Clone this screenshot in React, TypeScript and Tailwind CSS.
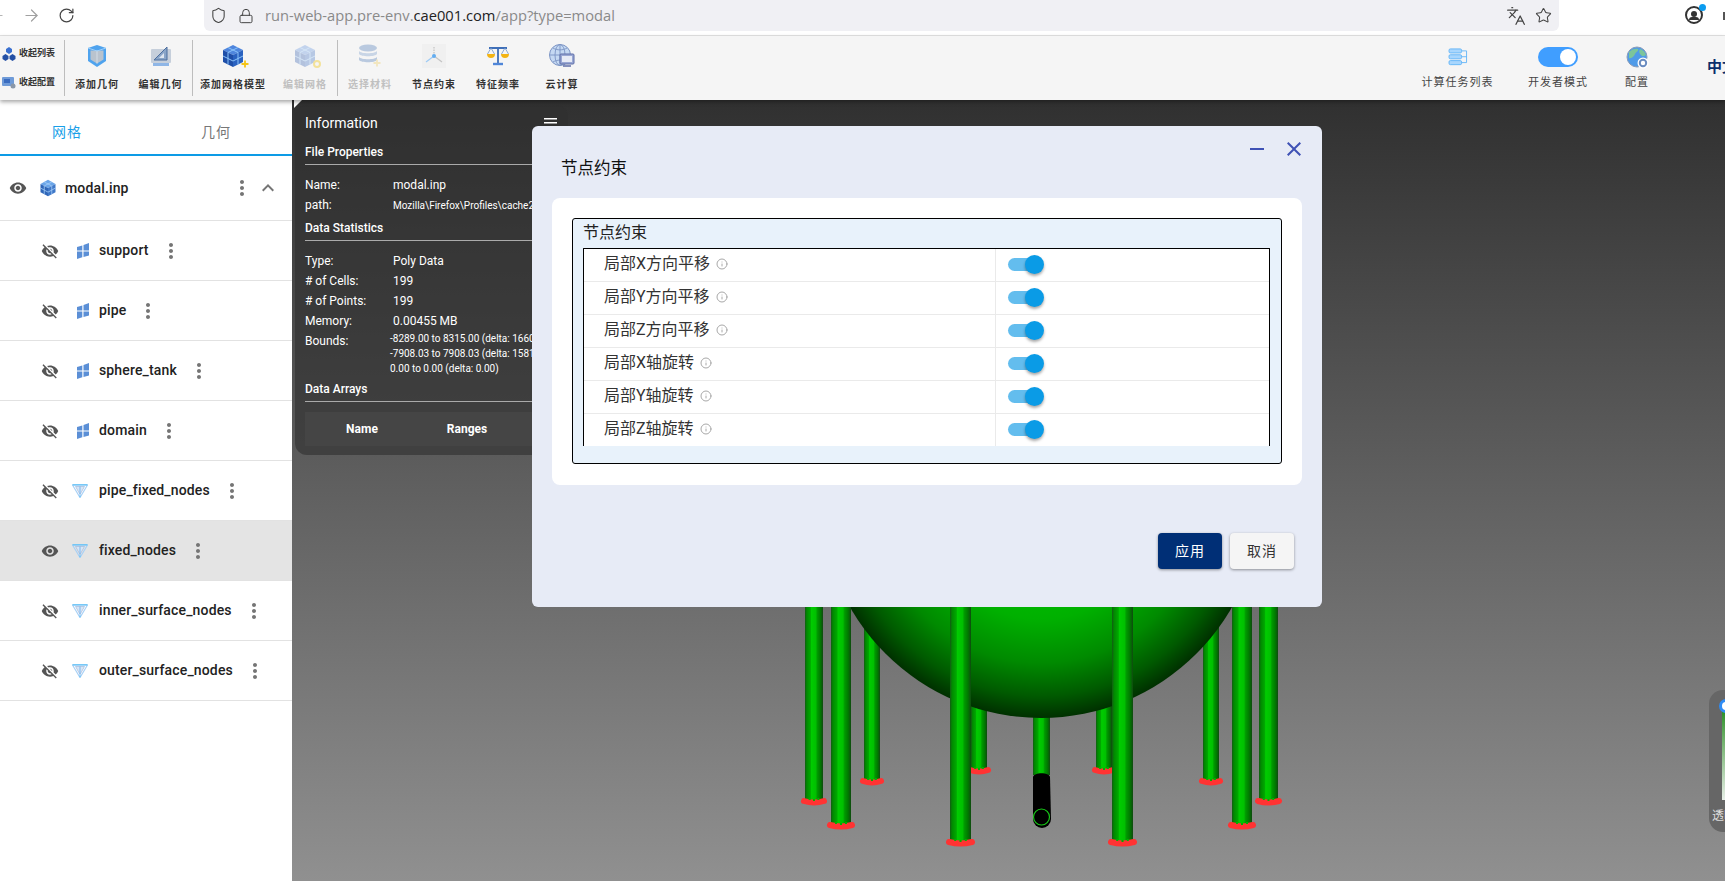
import { Info, Lock, RotateCw, ArrowLeft, ArrowRight, Shield, Star, Languages } from 'lucide-react';
import { MdVisibility, MdVisibilityOff, MdMoreVert, MdExpandLess, MdClose, MdRemove } from 'react-icons/md';

const meshRows = [
    { name: 'support', kind: 'pane' },
    { name: 'pipe', kind: 'pane' },
    { name: 'sphere_tank', kind: 'pane' },
    { name: 'domain', kind: 'pane' },
    { name: 'pipe_fixed_nodes', kind: 'node' },
    { name: 'fixed_nodes', kind: 'node', active: true },
    { name: 'inner_surface_nodes', kind: 'node' },
    { name: 'outer_surface_nodes', kind: 'node' },
];

const constraints = ['局部X方向平移', '局部Y方向平移', '局部Z方向平移', '局部X轴旋转', '局部Y轴旋转', '局部Z轴旋转'];

// pipes of the model, in page coordinates minus the viewer origin
const backPipes = [
    { x: 572, w: 16, b: 682 },
    { x: 679, w: 16, b: 671 },
    { x: 804, w: 16, b: 671 },
    { x: 911, w: 16, b: 682 },
];
const frontPipes = [
    { x: 513, w: 18, b: 702 },
    { x: 539, w: 20, b: 726 },
    { x: 658, w: 21, b: 743 },
    { x: 820, w: 21, b: 743 },
    { x: 940, w: 20, b: 726 },
    { x: 967, w: 19, b: 702 },
];

function CubeIcon({ size = 18 }: { size?: number }) {
    return (
        <svg width={size} height={size} viewBox="0 0 24 24">
            <path d="M12 1 22 6.500 12 12 2 6.500Z" fill="#6aa5e8" />
            <path d="M2 6.500 12 12v11L2 17.500Z" fill="#2f66b8" />
            <path d="M22 6.500 12 12v11l10-5.500Z" fill="#3f78c8" />
            <path d="M7 4 17 9.200M17 4 7 9.200M2 12l10 5.500 10-5.500M7 9.500V20M17 9.500V20" stroke="#a9d2fa" strokeWidth="1" fill="none" />
        </svg>
    );
}

function PaneIcon() {
    return (
        <svg width="12" height="16" viewBox="0 0 12 16" fill="#5b8fd6">
            <path d="M0 4 5.300 2.400v5H0Z" />
            <path d="M6.500 2 12 0v7.400H6.500Z" />
            <path d="M0 8.600h5.300v5.600L0 16Z" />
            <path d="M6.500 8.600H12v3.800l-5.500 1.500Z" />
        </svg>
    );
}

function NodeIcon() {
    return (
        <svg width="16" height="14" viewBox="0 0 16 14" fill="none">
            <path d="M.5 1h15L8 13.500Z" stroke="#a8d0f5" strokeWidth="1.200" />
            <path d="M3.500 2.500h9L8 10.500Z" fill="#d8e6f6" stroke="#a3b8d8" strokeWidth=".7" />
            <path d="M8 2.500v8" stroke="#7ab8f0" strokeWidth="1" />
            <path d="M.5.800h15" stroke="#6cc4f7" strokeWidth="1.400" />
            <path d="M6.800 11.500h2.400L8 13.800Z" fill="#6cc4f7" />
        </svg>
    );
}

function Plus({ x, y, color = '#f5c518' }: { x: number; y: number; color?: string }) {
    return <path d={`M${x - 3.5} ${y}h7M${x} ${y - 3.5}v7`} stroke={color} strokeWidth="1.800" />;
}

function AddGeometryIcon() {
    return (
        <svg width="24" height="26" viewBox="0 0 24 26">
            <path d="M3 5 12 2l9 3v13l-9 6-9-6Z" fill="#4fa3ee" />
            <path d="M5.500 7.500h13v9l-6.500 4-6.500-4Z" fill="#b9c3ce" />
            <path d="M12 7.500v13" stroke="#d5dde6" strokeWidth="1" />
            <path d="M3 5 12 8l9-3" stroke="#9fd0fa" strokeWidth="1" fill="none" />
        </svg>
    );
}

function EditGeometryIcon() {
    return (
        <svg width="26" height="26" viewBox="0 0 26 26">
            <rect x="3" y="6" width="20" height="14" rx="1" fill="#c6cfdb" />
            <path d="M6 17 19 4v13Z" fill="#8aa5c8" stroke="#4d6f9e" strokeWidth="1" />
            <path d="M11 15h5v-5Z" fill="#dde5ef" />
            <rect x="5" y="20" width="16" height="3" fill="#8fb6e6" />
        </svg>
    );
}

function MeshModelIcon({ faded }: { faded?: boolean }) {
    return (
        <svg width="26" height="26" viewBox="0 0 26 26" className={faded ? 'opacity-30' : ''}>
            <path d="M13 2 23 7 13 12 3 7Z" fill="#4f86dd" />
            <path d="M3 7l10 5v12L3 19Z" fill="#1f4fa8" />
            <path d="M23 7 13 12v12l10-5Z" fill="#2a62c0" />
            <path d="M8 4.500 18 9.500M18 4.500 8 9.500M3 13l10 5 10-5M8 9.500V21.500M18 9.500V21.500" stroke="#8cc4fa" strokeWidth="1" fill="none" />
        </svg>
    );
}

function DatabaseIcon() {
    return (
        <svg width="26" height="26" viewBox="0 0 26 26" className="opacity-50">
            <ellipse cx="11" cy="5" rx="9" ry="3.500" fill="#7f9fca" />
            <path d="M2 8c2 3 16 3 18 0v3c-2 3-16 3-18 0Z" fill="#9cb6d8" />
            <path d="M2 14c2 3 16 3 18 0v3c-2 3-16 3-18 0Z" fill="#7f9fca" />
            <Plus x={20} y={20} color="#f0d98a" />
        </svg>
    );
}

function AxesIcon() {
    return (
        <svg width="24" height="24" viewBox="0 0 24 24" className="bg-[#f0f0f0]">
            <path d="M12 12V2" stroke="#b8b8b8" strokeWidth="1" strokeDasharray="1.500 1" />
            <path d="M12 12 4 18" stroke="#9ccaf5" strokeWidth="1.200" />
            <path d="M12 12l8 6" stroke="#c4c4c4" strokeWidth="1.200" />
            <circle cx="12" cy="12" r="2" fill="#63adf0" />
        </svg>
    );
}

function ScaleIcon() {
    return (
        <svg width="24" height="24" viewBox="0 0 24 24">
            <path d="M3 4h18M12 4v15" stroke="#3f6fb8" strokeWidth="1.800" />
            <path d="M7 20h10" stroke="#4f86d8" strokeWidth="2.400" />
            <path d="M1 10h8a4 4 0 0 1-8 0ZM15 10h8a4 4 0 0 1-8 0Z" fill="#f3b415" />
            <path d="M5 4 1.500 10M5 4l3.500 6M19 4l-3.500 6M19 4l3.500 6" stroke="#6f95cc" strokeWidth=".8" />
        </svg>
    );
}

function CloudIcon() {
    return (
        <svg width="26" height="26" viewBox="0 0 26 26" fill="none">
            <circle cx="11" cy="12" r="10.500" fill="#c4d8f2" stroke="#7c94c4" strokeWidth="1" />
            <path d="M1 12h20M11 1.500v21M4 5c4 2.500 10 2.500 14 0M4 19c4-2.500 10-2.500 14 0" stroke="#7c94c4" strokeWidth=".9" />
            <ellipse cx="11" cy="12" rx="5" ry="10.500" stroke="#7c94c4" strokeWidth=".9" />
            <rect x="11" y="11" width="14" height="10" rx="1" fill="#9aa8d4" stroke="#5f6ea8" strokeWidth="1" />
            <rect x="13" y="13" width="10" height="6" fill="#e7ebf6" />
            <path d="M14 23h8" stroke="#5f6ea8" strokeWidth="1.500" />
        </svg>
    );
}

function ServersIcon() {
    return (
        <svg width="20" height="18" viewBox="0 0 22 20" fill="#a8d6fd" stroke="#62b4f7" strokeWidth="1">
            <rect x="1" y="1" width="14" height="4.500" rx="1.500" />
            <rect x="1" y="7.500" width="14" height="4.500" rx="1.500" />
            <rect x="1" y="14" width="14" height="4.500" rx="1.500" />
            <path d="M15 3.200h5.500v13H15M20.500 9.700H15" fill="none" />
        </svg>
    );
}

function GlobeGearIcon() {
    return (
        <svg width="23" height="23" viewBox="0 0 23 23">
            <circle cx="11" cy="11" r="10" fill="#4f9be8" stroke="#8a9cb8" strokeWidth="1" />
            <path d="M3 6c3-3 7-4 9-3 1 2-2 3-3 5S6 13 3 12ZM14 3c3 1 5 3 6 6-2 2-5 1-6-1s-1-3 0-5Z" fill="#7cc59a" />
            <circle cx="17" cy="17" r="5.500" fill="#fff" />
            <circle cx="17" cy="17" r="3.200" fill="none" stroke="#6a8cc0" strokeWidth="2" />
        </svg>
    );
}

function ToolItem({ label, width, faded, children }: { label: string; width: string; faded?: boolean; children: React.ReactNode }) {
    return (
        <div className={`${width} flex flex-col items-center shrink-0 h-full`}>
            <div className="h-[34px] flex items-center justify-center mt-[3px]">{children}</div>
            <span className={`mt-[2px] text-[10px] tracking-[1px] font-bold leading-[20px] whitespace-nowrap ${faded ? 'text-[#c0c0c0]' : 'text-[#333]'}`}>
                {label}
            </span>
        </div>
    );
}

function Sep() {
    return <div className="w-px h-[56px] bg-[#bdbdbd] shrink-0" />;
}

function Browser() {
    return (
        <div className="h-[36px] bg-white border-b border-[#e3e3e3] flex items-start shrink-0 relative">
            <div className="w-[204px] h-[31px] flex items-center shrink-0">
                <ArrowLeft size={19} strokeWidth={1.500} className="text-[#b5b5b5] ml-[-13px]" />
                <ArrowRight size={19} strokeWidth={1.500} className="text-[#a0a0a0] ml-[16px]" />
                <RotateCw size={17} strokeWidth={1.700} className="text-[#444] ml-[17px]" />
            </div>
            <div className="w-[1355px] h-[31px] bg-[#f0f0f4] rounded-br-[6px] rounded-bl-[6px] flex items-center shrink-0">
                <Shield size={17} strokeWidth={1.500} className="text-[#444] ml-[6px]" />
                <Lock size={16} strokeWidth={1.500} className="text-[#444] ml-[11px]" />
                <span className="ml-[11px] text-[14.700px] text-[#8a8a8a] font-['Open_Sans'] whitespace-nowrap">
                    run-web-app.pre-env.<span className="text-[#222]">cae001.com</span>/app?type=modal
                </span>
                <Languages size={20} strokeWidth={1.500} className="text-[#444] ml-auto mr-[9px]" />
                <Star size={17} strokeWidth={1.500} className="text-[#444] mr-[7px]" />
            </div>
            <div className="relative ml-[126px] mt-[6px] w-[18px] h-[18px] rounded-full border-2 border-[#333] flex flex-col items-center justify-center shrink-0">
                <div className="w-[6px] h-[6px] rounded-full bg-[#333]" />
                <div className="w-[10px] h-[3px] rounded-t-full bg-[#333]" />
                <div className="absolute top-[-4px] right-[-5px] w-[7px] h-[7px] rounded-full bg-[#0a9cf0]" />
            </div>
            <div className="ml-[20px] mt-[12px] w-[3px] h-[8px] bg-[#555] shrink-0" />
        </div>
    );
}

function Toolbar() {
    return (
        <div className="h-[64px] bg-[#f5f5f5] flex items-center shrink-0 relative z-20 shadow-[0_2px_4px_rgba(0,0,0,0.35)]">
            <div className="w-[64px] h-full flex flex-col shrink-0">
                <div className="h-[28px] mt-[4px] flex items-center pl-[2px] gap-[3px]">
                    <svg width="14" height="14" viewBox="0 0 14 14" fill="#2450a5">
                        <path d="M7 0l3 2v3L7 7 4 5V2Z" fill="#3a70d0" />
                        <path d="M3.500 7l3 2v3l-3 2-3-2V9ZM10.500 7l3 2v3l-3 2-3-2V9Z" />
                    </svg>
                    <span className="text-[9px] font-bold text-[#333] whitespace-nowrap">收起列表</span>
                </div>
                <div className="h-[28px] mt-[1px] flex items-center pl-[2px] gap-[3px]">
                    <svg width="14" height="12" viewBox="0 0 14 12">
                        <rect x="0" y="0" width="12" height="9" rx="1" fill="#6f9bd8" />
                        <rect x="2" y="2" width="6" height="4" fill="#3a6cc0" />
                        <circle cx="11" cy="9" r="2.500" fill="#8a97a8" />
                    </svg>
                    <span className="text-[9px] font-bold text-[#333] whitespace-nowrap">收起配置</span>
                </div>
            </div>
            <Sep />
            <ToolItem label="添加几何" width="w-[64px]"><AddGeometryIcon /></ToolItem>
            <ToolItem label="编辑几何" width="w-[63px]"><EditGeometryIcon /></ToolItem>
            <Sep />
            <ToolItem label="添加网格模型" width="w-[80px]">
                <div className="relative">
                    <MeshModelIcon />
                    <svg width="10" height="10" viewBox="0 0 10 10" className="absolute right-[-4px] bottom-[0px]">
                        <Plus x={5} y={5} />
                    </svg>
                </div>
            </ToolItem>
            <ToolItem label="编辑网格" width="w-[64px]" faded>
                <div className="relative">
                    <MeshModelIcon faded />
                    <div className="absolute right-[-3px] bottom-[1px] w-[8px] h-[8px] rounded-full border-2 border-[#f3e29a]" />
                </div>
            </ToolItem>
            <Sep />
            <ToolItem label="选择材料" width="w-[64px]" faded><DatabaseIcon /></ToolItem>
            <ToolItem label="节点约束" width="w-[64px]"><AxesIcon /></ToolItem>
            <ToolItem label="特征频率" width="w-[64px]"><ScaleIcon /></ToolItem>
            <ToolItem label="云计算" width="w-[64px]"><CloudIcon /></ToolItem>
            <div className="flex-1" />
            <div className="w-[318px] shrink-0 flex h-full">
                <TopRightItem label="计算任务列表" width="w-[101px]"><ServersIcon /></TopRightItem>
                <TopRightItem label="开发者模式" width="w-[100px]">
                    <div className="w-[40px] h-[20px] rounded-full bg-[#409eff] flex items-center justify-end pr-[2px]">
                        <div className="w-[16px] h-[16px] rounded-full bg-white" />
                    </div>
                </TopRightItem>
                <TopRightItem label="配置" width="w-[58px]"><GlobeGearIcon /></TopRightItem>
                <span className="ml-[41px] mt-[21px] text-[15px] leading-[20px] font-bold text-[#0b2f6b] whitespace-nowrap">中文</span>
            </div>
        </div>
    );
}

function TopRightItem({ label, width, children }: { label: string; width: string; children: React.ReactNode }) {
    return (
        <div className={`${width} flex flex-col items-center shrink-0`}>
            <div className="h-[30px] mt-[6px] flex items-center justify-center">{children}</div>
            <span className="mt-[2px] text-[11px] tracking-[1px] leading-[18px] text-[#444] whitespace-nowrap">{label}</span>
        </div>
    );
}

function Sidebar() {
    return (
        <div className="w-[292px] shrink-0 bg-white flex flex-col">
            <div className="h-[56px] pt-[10px] flex items-center border-b-2 border-[#0d9be6] shrink-0 text-[14px] tracking-[1px]">
                <div className="w-[134px] text-center text-[#1a9fe8]">网格</div>
                <div className="flex-1 pl-[6px] text-center text-[#777]">几何</div>
            </div>
            <div className="h-[65px] flex items-center border-b border-[#e2e2e2] pl-[9px] pr-[12px] shrink-0">
                <MdVisibility size={18} className="text-[#555]" />
                <div className="ml-[12px]"><CubeIcon /></div>
                <span className="ml-[8px] text-[14px] font-medium tracking-[0.15px] text-[#222]">modal.inp</span>
                <MdMoreVert size={24} className="ml-auto text-[#757575]" />
                <MdExpandLess size={24} className="ml-[2px] text-[#757575]" />
            </div>
            {meshRows.map((row) => (
                <div
                    key={row.name}
                    className={`h-[60px] flex items-center border-b border-[#e2e2e2] pl-[41px] shrink-0 ${row.active ? 'bg-[#e4e4e4]' : ''}`}
                >
                    {row.active ? (
                        <MdVisibility size={18} className="text-[#555]" />
                    ) : (
                        <MdVisibilityOff size={18} className="text-[#555]" />
                    )}
                    <div className={`ml-[14px] w-[18px] flex ${row.kind === 'pane' ? 'pl-[4px]' : '-translate-x-[1px]'}`}>
                        {row.kind === 'pane' ? <PaneIcon /> : <NodeIcon />}
                    </div>
                    <span className="ml-[8px] text-[14px] font-medium tracking-[0.15px] text-[#222] whitespace-nowrap">{row.name}</span>
                    <MdMoreVert size={24} className="ml-[10px] text-[#757575]" />
                </div>
            ))}
        </div>
    );
}

function Pipe({ x, w, b, top = 480 }: { x: number; w: number; b: number; top?: number }) {
    const cx = x + w / 2;
    return (
        <g>
            <rect x={x} y={top} width={w} height={b - top} fill="url(#pipe)" />
            <path d={`M${x - 1} ${b - 1}Q${cx} ${b + 2} ${x + w + 1} ${b - 1}`} stroke="#ff3333" strokeWidth="6" strokeLinecap="round" fill="none" />
            <rect x={x + w * 0.2} y={b - 4} width="2" height="2" fill="#00b000" />
            <rect x={cx - 1} y={b - 3} width="2" height="2" fill="#00b000" />
            <rect x={x + w * 0.8 - 2} y={b - 4} width="2" height="2" fill="#00b000" />
        </g>
    );
}

function Scene() {
    return (
        <svg className="absolute inset-0" width="1433" height="781" viewBox="0 0 1433 781">
            <defs>
                <linearGradient id="pipe" x1="0" x2="1" y1="0" y2="0">
                    <stop offset="0" stopColor="#145a14" />
                    <stop offset="0.1" stopColor="#008a00" />
                    <stop offset="0.3" stopColor="#00a800" />
                    <stop offset="0.35" stopColor="#00cc00" />
                    <stop offset="0.6" stopColor="#00c000" />
                    <stop offset="0.68" stopColor="#009a00" />
                    <stop offset="0.85" stopColor="#007a00" />
                    <stop offset="1" stopColor="#104a10" />
                </linearGradient>
                <radialGradient id="tank" cx="749" cy="398" r="220" gradientUnits="userSpaceOnUse">
                    <stop offset="0" stopColor="#00d800" />
                    <stop offset="0.55" stopColor="#00b000" />
                    <stop offset="0.75" stopColor="#008a00" />
                    <stop offset="0.9" stopColor="#005a00" />
                    <stop offset="1" stopColor="#003000" />
                </radialGradient>
            </defs>
            {backPipes.map((p) => (
                <Pipe key={p.x} {...p} />
            ))}
            <rect x="741" y="560" width="17" height="115" fill="url(#pipe)" />
            <path d="M741 677c1-5 16-5 17 0l1 42a9 9 0 0 1-18 0Z" fill="#000" />
            <circle cx="749.500" cy="717" r="8" fill="#000" stroke="#18c818" strokeWidth="1.200" />
            <circle cx="749" cy="398" r="220" fill="url(#tank)" />
            {frontPipes.map((p) => (
                <Pipe key={p.x} {...p} />
            ))}
        </svg>
    );
}

function InfoRow({ label, value, small }: { label: string; value: string; small?: boolean }) {
    return (
        <div className="flex h-[20px] items-center whitespace-nowrap">
            <span className="w-[88px] shrink-0">{label}</span>
            <span className={small ? 'text-[10px]' : ''}>{value}</span>
        </div>
    );
}

function InfoHeading({ label }: { label: string }) {
    return <div className="h-[25px] leading-[24px] text-[12px] font-medium border-b border-[#aaa] mb-[10px] whitespace-nowrap">{label}</div>;
}

function InfoPanel() {
    return (
        <div className="absolute left-[3px] top-[5px] w-[273px] h-[350px] rounded-[12px] bg-[rgba(47,47,47,0.61)] pl-[10px] pt-[8px] text-white text-[12px] overflow-hidden">
            <div className="text-[14px] h-[20px] leading-[20px] mb-[7px]">Information</div>
            <svg width="14" height="10" viewBox="0 0 14 10" className="absolute left-[248px] top-[13px]" fill="#fff">
                <rect x="1" y="0" width="13" height="1.500" />
                <rect x="1" y="4" width="13" height="1.500" />
                <rect x="1" y="8" width="4" height="1.500" />
            </svg>
            <InfoHeading label="File Properties" />
            <InfoRow label="Name:" value="modal.inp" />
            <InfoRow label="path:" value="Mozilla\Firefox\Profiles\cache2" small />
            <div className="h-[1px]" />
            <InfoHeading label="Data Statistics" />
            <InfoRow label="Type:" value="Poly Data" />
            <InfoRow label="# of Cells:" value="199" />
            <InfoRow label="# of Points:" value="199" />
            <InfoRow label="Memory:" value="0.00455 MB" />
            <div className="flex whitespace-nowrap h-[46px]">
                <span className="w-[85px] shrink-0 leading-[20px]">Bounds:</span>
                <div className="text-[10px] leading-[15px]">
                    <div>-8289.00 to 8315.00 (delta: 16604.00)</div>
                    <div>-7908.03 to 7908.03 (delta: 15816.06)</div>
                    <div>0.00 to 0.00 (delta: 0.00)</div>
                </div>
            </div>
            <InfoHeading label="Data Arrays" />
            <div className="h-[34px] mt-[1px] bg-[#454545] flex items-center font-bold whitespace-nowrap">
                <span className="w-[114px] text-center">Name</span>
                <span className="w-[96px] text-center">Ranges</span>
            </div>
        </div>
    );
}

function ConstraintRow({ label, last }: { label: string; last: boolean }) {
    return (
        <div className={`flex ${last ? 'h-[32px]' : 'h-[33px] border-b border-[#eaeaea]'}`}>
            <div className="w-[412px] shrink-0 border-r border-[#eaeaea] pl-[20px] pb-[2px] flex items-center text-[16px] text-[#333]">
                {label}
                <Info size={12} className="ml-[6px] text-[#a8a8a8]" />
            </div>
            <div className="flex items-center pl-[12px] pb-[2px]">
                <div className="relative w-[33px] h-[13px] rounded-full bg-[#63bdee]">
                    <div className="absolute right-[-3px] top-[-3px] w-[19px] h-[19px] rounded-full bg-[#0a9be6] shadow-[0_2px_3px_rgba(0,0,0,0.35)]" />
                </div>
            </div>
        </div>
    );
}

function ConstraintModal() {
    return (
        <div className="absolute left-[240px] top-[26px] w-[790px] h-[481px] bg-[#e7ebf6] rounded-[6px] flex flex-col z-10">
            <div className="h-[72px] flex items-start justify-between shrink-0 pr-[16px]">
                <span className="pl-[29px] pt-[31px] text-[16.500px] leading-[24px] text-[#111]">节点约束</span>
                <div className="flex gap-[13px] pt-[11px] text-[#3f51b5]">
                    <MdRemove size={24} />
                    <MdClose size={24} />
                </div>
            </div>
            <div className="mx-[20px] h-[287px] bg-white rounded-[8px] p-[20px] shrink-0">
                <div className="h-[246px] border border-black rounded-[3px] bg-[#e8f2fb] pl-[10px] pr-[11px]">
                    <div className="h-[29px] leading-[27px] text-[16px] text-[#222]">节点约束</div>
                    <div className="bg-white border-t border-l border-r border-black rounded-t-[1px]">
                        {constraints.map((c, i) => (
                            <ConstraintRow key={c} label={c} last={i === constraints.length - 1} />
                        ))}
                    </div>
                </div>
            </div>
            <div className="flex justify-end gap-[8px] pr-[28px] pt-[48px]">
                <button className="w-[64px] h-[36px] rounded-[4px] bg-[#002f76] text-white text-[14px] tracking-[1px] shadow-[0_1px_3px_rgba(0,0,0,0.4)]">应用</button>
                <button className="w-[64px] h-[36px] rounded-[4px] bg-[#f5f5f5] text-[#333] text-[14px] tracking-[1px] shadow-[0_1px_3px_rgba(0,0,0,0.4)]">取消</button>
            </div>
        </div>
    );
}

function OpacityWidget() {
    return (
        <div className="absolute left-[1417px] top-[590px] w-[60px] h-[142px] rounded-[14px] bg-[#666] pl-[3px] text-[12px] text-[#ddd] whitespace-nowrap">
            <div className="relative ml-[10px] mt-[15px] w-[14px] h-[95px] bg-gradient-to-b from-[#0a8a0a] to-[#e8efe8]">
                <div className="absolute top-[-6px] left-[-3px] w-[14px] h-[14px] rounded-full bg-white border-[3px] border-[#2f8cf5]" />
            </div>
            <div className="mt-[7px] leading-[18px]">透明度</div>
        </div>
    );
}

export default function App() {
    return (
        <div className="w-[1725px] h-[881px] overflow-hidden flex flex-col font-[Roboto,'Noto_Sans_CJK_SC',sans-serif]">
            <Browser />
            <Toolbar />
            <div className="flex-1 flex min-h-0">
                <Sidebar />
                <div className="relative flex-1 overflow-hidden bg-linear-to-b/srgb from-[#303030] to-[#909090]">
                    <Scene />
                    <div className="absolute left-[2px] top-0 w-0 h-0 border-t-[8px] border-r-[8px] border-t-white border-r-transparent" />
                    <InfoPanel />
                    <ConstraintModal />
                    <OpacityWidget />
                </div>
            </div>
        </div>
    );
}
